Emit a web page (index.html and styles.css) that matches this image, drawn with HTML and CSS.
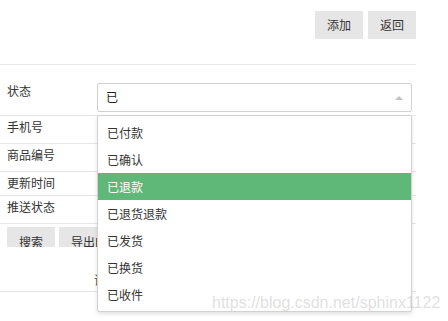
FILE: index.html
```html
<!DOCTYPE html>
<html lang="zh">
<head>
<meta charset="utf-8">
<link rel="stylesheet" href="styles.css">
</head>
<body>
<div class="page">
  <div class="toolbar">
    <button class="btn">添加</button>
    <button class="btn">返回</button>
  </div>
  <div class="form">
    <div class="row row-status">
      <div class="label">状态</div>
      <div class="field">
        <div class="select">
          <span class="select-value">已</span>
          <span class="edge"></span>
        </div>
        <ul class="dropdown">
          <li>已付款</li>
          <li>已确认</li>
          <li class="active">已退款</li>
          <li>已退货退款</li>
          <li>已发货</li>
          <li>已换货</li>
          <li>已收件</li>
        </ul>
      </div>
    </div>
    <div class="row row-28"><div class="label">手机号</div></div>
    <div class="row row-28"><div class="label">商品编号</div></div>
    <div class="row row-24"><div class="label">更新时间</div></div>
    <div class="row row-28"><div class="label">推送状态</div></div>
    <div class="row row-actions">
      <div class="btn-clip">
        <button class="btn">搜索</button>
        <button class="btn">导出Excel</button>
      </div>
      <div class="hint">请输入查询条件后点击搜索</div>
    </div>
  </div>
  <div class="watermark">https://blog.csdn.net/sphinx1122</div>
</div>
</body>
</html>
```
FILE: styles.css
```css
* { box-sizing: border-box; }
html, body { margin: 0; padding: 0; background: #fff; }
body {
  font-family: "Noto Sans CJK SC", "Microsoft YaHei", sans-serif;
  font-size: 12px;
  color: #333;
  width: 448px;
  height: 321px;
  overflow: hidden;
}
.page { position: relative; width: 448px; height: 321px; }

.toolbar {
  width: 416px;
  height: 65px;
  border-bottom: 1px solid #e6e6e6;
  display: flex;
  justify-content: flex-end;
  align-items: flex-start;
  gap: 5px;
  padding-top: 11px;
}
.btn {
  font-family: inherit;
  font-size: 12px;
  color: #333;
  background: #e6e6e6;
  border: none;
  border-radius: 1px;
  height: 28px;
  padding: 0 12px;
  line-height: 28px;
  margin: 0;
  white-space: nowrap;
}

.form { width: 416px; }
.row {
  display: flex;
  border-bottom: 1px solid #e6e6e6;
}
.label {
  width: 97px;
  padding-left: 7px;
  padding-top: 3px;
  line-height: 16px;
  flex: none;
}
.row-28 { height: 28px; }
.row-24 { height: 24px; }

.row-status { height: 51px; }
.row-status .label { padding-top: 18px; }
.field {
  position: relative;
  width: 315px;
  padding-top: 18px;
}
.select {
  height: 29px;
  border: 1px solid #d2d2d2;
  border-radius: 2px;
  display: flex;
  align-items: center;
  justify-content: space-between;
  padding: 0 8px 1px 8px;
  color: #222;
}
.select-value { line-height: 16px; }
.edge {
  width: 0;
  height: 0;
  border-style: solid;
  border-width: 0 4px 4px 4px;
  border-color: transparent transparent #c2c2c2 transparent;
  margin-top: 1px;
}
.dropdown {
  position: absolute;
  left: 0;
  top: 50px;
  width: 315px;
  margin: 0;
  padding: 3px 0;
  list-style: none;
  background: #fff;
  border: 1px solid #d2d2d2;
  border-radius: 2px;
  box-shadow: 0 2px 4px rgba(0,0,0,.12);
  z-index: 10;
}
.dropdown li {
  height: 27px;
  line-height: 27px;
  padding: 0 9px;
  color: #333;
}
.dropdown li.active {
  background: #5fb878;
  color: #fff;
}

.row-actions {
  height: 68px;
  flex-direction: column;
}
.btn-clip {
  margin-top: 3px;
  margin-left: 7px;
  height: 20px;
  overflow: hidden;
  display: flex;
  gap: 4px;
  align-items: flex-start;
}
.btn-clip .btn { line-height: 30px; }
.hint {
  padding-left: 94px;
  margin-top: 25px;
  line-height: 16px;
  color: #444;
  white-space: nowrap;
}

.watermark {
  position: absolute;
  left: 212px;
  top: 294px;
  font-family: "Liberation Sans", Arial, sans-serif;
  font-size: 16px;
  line-height: 18px;
  color: rgba(185, 185, 185, 0.45);
  z-index: 20;
  white-space: nowrap;
}
```
